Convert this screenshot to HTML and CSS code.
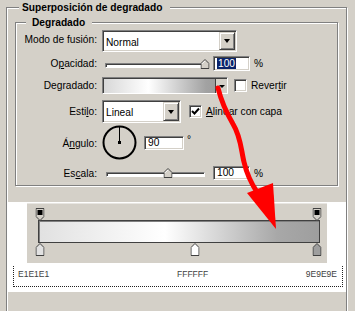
FILE: index.html
```html
<!DOCTYPE html>
<html lang="es">
<head>
<meta charset="utf-8">
<title>Superposición de degradado</title>
<link rel="stylesheet" href="styles.css">
</head>
<body>
<fieldset class="group outer">
  <legend class="legend outer-legend">Superposición de degradado</legend>
  <fieldset class="group inner">
    <legend class="legend inner-legend">Degradado</legend>

    <div class="row r1">
      <span class="lbl">Modo de fusión:</span>
      <div class="select sel-mode">
        <span class="sel-val">Normal</span>
        <span class="drop-btn"><span class="tri"></span></span>
      </div>
    </div>

    <div class="row r2">
      <span class="lbl">O<u>p</u>acidad:</span>
      <div class="slider sl-op">
        <div class="track"></div>
        <svg class="thumb" style="left:100%" width="9" height="10" viewBox="0 0 9 10"><path d="M4.5 0.5 L8.5 4.5 V9.5 H0.5 V4.5 Z" fill="#d4d0c8" stroke="#404040"/><path d="M1.5 4.8 L4.5 1.8" stroke="#fff"/></svg>
      </div>
      <div class="num num-op"><span class="hl">100</span></div>
      <span class="unit">%</span>
    </div>

    <div class="row r3">
      <span class="lbl">Degradado:</span>
      <div class="swatch">
        <span class="swatch-grad"></span>
        <span class="mini-btn"><span class="tri small"></span></span>
      </div>
      <span class="chk chk-rev"></span>
      <span class="chk-lbl">Rever<u>t</u>ir</span>
    </div>

    <div class="row r4">
      <span class="lbl">Esti<u>l</u>o:</span>
      <div class="select sel-style">
        <span class="sel-val">Lineal</span>
        <span class="drop-btn"><span class="tri"></span></span>
      </div>
      <span class="chk chk-align"><svg width="9" height="9" viewBox="0 0 9 9"><path d="M1 4 L3.5 6.5 L8 1.5" fill="none" stroke="#000" stroke-width="2"/></svg></span>
      <span class="chk-lbl"><u>A</u>linear con capa</span>
    </div>

    <div class="row r5">
      <span class="lbl"><span>Á</span><u>n</u>gulo:</span>
      <svg class="dial" width="36" height="36" viewBox="0 0 36 36"><circle cx="17.5" cy="17.5" r="16" fill="none" stroke="#000" stroke-width="2"/><line x1="17.5" y1="17.5" x2="17.5" y2="2" stroke="#000" stroke-width="1"/><rect x="16" y="16" width="3" height="3" fill="#000"/></svg>
      <div class="num num-ang">90</div>
      <span class="deg">°</span>
    </div>

    <div class="row r6">
      <span class="lbl">Es<u>c</u>ala:</span>
      <div class="slider sl-sc">
        <div class="track"></div>
        <svg class="thumb" style="left:63%" width="9" height="10" viewBox="0 0 9 10"><path d="M4.5 0.5 L8.5 4.5 V9.5 H0.5 V4.5 Z" fill="#d4d0c8" stroke="#404040"/><path d="M1.5 4.8 L4.5 1.8" stroke="#fff"/></svg>
      </div>
      <div class="num num-sc">100</div>
      <span class="unit">%</span>
    </div>
  </fieldset>

  <div class="white">
    <div class="editor">
      <div class="bar">
        <div class="stops">
          <svg class="stop-top" style="left:0%" width="9" height="13" viewBox="0 0 9 13"><path d="M0.5 0.5 H8.5 V8.5 L4.5 12.5 L0.5 8.5 Z" fill="#d4d0c8" stroke="#404040"/><rect x="2" y="2" width="5" height="5" fill="#000"/></svg>
          <svg class="stop-top" style="left:100%" width="9" height="13" viewBox="0 0 9 13"><path d="M0.5 0.5 H8.5 V8.5 L4.5 12.5 L0.5 8.5 Z" fill="#d4d0c8" stroke="#404040"/><rect x="2" y="2" width="5" height="5" fill="#000"/></svg>
          <svg class="stop-bot" style="left:0%" width="9" height="13" viewBox="0 0 9 13"><path d="M4.5 0.5 L8.5 4.5 V12.5 H0.5 V4.5 Z" fill="#e1e1e1" stroke="#404040"/></svg>
          <svg class="stop-bot" style="left:56%" width="9" height="13" viewBox="0 0 9 13"><path d="M4.5 0.5 L8.5 4.5 V12.5 H0.5 V4.5 Z" fill="#ffffff" stroke="#404040"/></svg>
          <svg class="stop-bot" style="left:100%" width="9" height="13" viewBox="0 0 9 13"><path d="M4.5 0.5 L8.5 4.5 V12.5 H0.5 V4.5 Z" fill="#9e9e9e" stroke="#404040"/></svg>
        </div>
      </div>
    </div>
    <div class="stop-labels">
      <span>E1E1E1</span>
      <span>FFFFFF</span>
      <span class="right">9E9E9E</span>
    </div>
  </div>
</fieldset>

<svg class="annot" width="355" height="311" viewBox="0 0 355 311">
  <path d="M218 88 C221 100 226 112 233 124 C241 137 241 150 244 162 C247 175 251 183 257 192" fill="none" stroke="#ff0000" stroke-width="5" stroke-linecap="round"/>
  <polygon points="247,193 273,183 276,229" fill="#ff0000"/>
</svg>
</body>
</html>
```

FILE: styles.css
```css
* { box-sizing: border-box; }
html, body { margin: 0; padding: 0; overflow: hidden; }
body {
  width: 355px;
  height: 311px;
  position: relative;
  background: #d4d0c8;
  font-family: "Liberation Sans", Arial, sans-serif;
  font-size: 10.2px;
  color: #000;
}

.group {
  margin: 0;
  padding: 0;
  min-width: 0;
  border: 1px solid #808080;
  box-shadow: inset 1px 1px 0 #fff, 1px 1px 0 #fff;
}
.outer {
  margin-left: 6px;
  width: 341px;
  padding-bottom: 40px;
}
.inner {
  margin: 0 8px;
  padding-bottom: 5px;
}
.legend {
  font-weight: bold;
  line-height: 15px;
  height: 15px;
  background: #d4d0c8;
}
.outer-legend { margin-left: 12px; padding: 0 8px 0 3px; }
.inner-legend { margin-left: 10px; padding: 0 7px 0 6px; }

.row { display: flex; align-items: center; }
.r1 { height: 22px; }
.r2 { height: 15px; margin-top: 4px; }
.r3 { height: 17px; margin-top: 6px; }
.r4 { height: 23px; margin-top: 6px; }
.r5 { height: 36px; margin-top: 2px; }
.r6 { height: 14px; margin-top: 5px; }

.lbl {
  width: 81px;
  margin-right: 5px;
  text-align: right;
  flex: none;
  white-space: nowrap;
}
.r1 .lbl { margin-top: -4px; }

.select {
  display: flex;
  background: #fff;
  border: 1px solid;
  border-color: #808080 #fff #fff #808080;
  box-shadow: inset 1px 1px 0 #404040, inset -1px -1px 0 #d4d0c8;
  padding: 1px;
  height: 100%;
}
.sel-mode { width: 135px; }
.sel-style { width: 79px; }
.sel-val {
  flex: 1;
  display: flex;
  align-items: center;
  padding-left: 2px;
  padding-top: 2px;
}
.drop-btn {
  width: 16px;
  background: #d4d0c8;
  border: 1px solid;
  border-color: #d4d0c8 #404040 #404040 #d4d0c8;
  box-shadow: inset 1px 1px 0 #fff, inset -1px -1px 0 #808080;
  display: flex;
  align-items: center;
  justify-content: center;
}
.tri {
  width: 0;
  height: 0;
  border-left: 3.5px solid transparent;
  border-right: 3.5px solid transparent;
  border-top: 4px solid #000;
}
.tri.small {
  border-left-width: 3px;
  border-right-width: 3px;
  border-top-width: 3px;
}

.slider { position: relative; height: 10px; }
.sl-op { width: 100px; margin-left: 3px; }
.sl-sc { width: 99px; margin-left: 4px; }
.track {
  position: absolute;
  left: 0; right: 0; top: 4px;
  height: 5px;
  background: #fff;
  border: 1px solid;
  border-color: #808080 #fff #fff #808080;
  box-shadow: inset 1px 1px 0 #404040;
}
.thumb {
  position: absolute;
  top: 0;
  transform: translateX(-50%);
}

.num {
  background: #fff;
  border: 1px solid;
  border-color: #808080 #fff #fff #808080;
  box-shadow: inset 1px 1px 0 #404040, inset -1px -1px 0 #d4d0c8;
  padding: 0 0 0 3px;
  height: 15px;
  line-height: 13px;
}
.num-op { width: 37px; margin-left: 8px; }
.num-sc { width: 37px; margin-left: 8px; height: 14px; line-height: 12px; }
.num-ang { width: 40px; margin-left: 6px; height: 14px; line-height: 12px; }
.hl { background: #0a246a; color: #fff; padding: 0 1px; }
.unit { margin-left: 4px; }
.deg { margin-left: 3px; margin-top: -8px; }

.swatch {
  display: flex;
  width: 126px;
  height: 17px;
  border: 1px solid;
  border-color: #808080 #fff #fff #808080;
  box-shadow: inset 1px 1px 0 #404040;
  padding: 1px 0 0 1px;
}
.swatch-grad {
  flex: 1;
  background: linear-gradient(to right, #d8d8d8 0%, #ffffff 40%, #a2a2a2 92%, #9e9e9e 100%);
}
.mini-btn {
  width: 12px;
  background: #d4d0c8;
  border-left: 1px solid #404040;
  display: flex;
  align-items: center;
  justify-content: center;
}

.chk {
  width: 13px;
  height: 13px;
  flex: none;
  background: #fff;
  border: 1px solid;
  border-color: #808080 #fff #fff #808080;
  box-shadow: inset 1px 1px 0 #404040, inset -1px -1px 0 #d4d0c8;
  display: flex;
  align-items: center;
  justify-content: center;
}
.chk-rev { margin-left: 6px; }
.chk-align { margin-left: 8px; }
.chk-lbl { margin-left: 4px; white-space: nowrap; }

.dial { flex: none; }

.white {
  margin-top: 16px;
  height: 90px;
  background: #fff;
  padding-top: 1px;
}
.editor {
  margin-left: 20px;
  width: 300px;
  height: 60px;
  background: #d4d0c8;
  border-top: 1px solid #e8e6e2;
  padding: 16px 0 0 11px;
}
.bar {
  position: relative;
  width: 282px;
  height: 23px;
  border: 1px solid #404040;
  box-shadow: inset 1px 1px 0 #808080;
  background: linear-gradient(to right, #e1e1e1 0%, #ffffff 45%, #a8a8a8 85%, #9e9e9e 100%);
}
.stops {
  position: absolute;
  left: 1px; right: 2px; top: -1px; bottom: -1px;
}
.stop-top {
  position: absolute;
  top: -12px;
  transform: translateX(-50%);
}
.stop-bot {
  position: absolute;
  top: 100%;
  transform: translateX(-50%);
}

.stop-labels {
  margin: 3px 0 0 6px;
  width: 330px;
  height: 21px;
  border: 1px dotted #202020;
  border-top: none;
  padding: 3px 5px 0 4px;
  display: grid;
  grid-template-columns: 159px auto 1fr;
  align-items: start;
  font-size: 8.5px;
  line-height: 10px;
  color: #404040;
}
.stop-labels .right { text-align: right; }

.annot {
  position: absolute;
  left: 0;
  top: 0;
  pointer-events: none;
}
```
